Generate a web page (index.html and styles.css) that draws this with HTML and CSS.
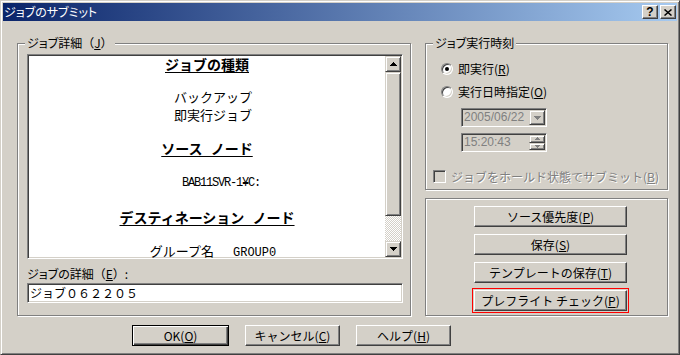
FILE: index.html
```html
<!DOCTYPE html>
<html>

	<head lang="ja">
		<meta charset="UTF-8">
		<title>ジョブのサブミット</title>
		<link rel="stylesheet" href="styles.css">
	</head>

	<body>
		<div class="window">
			<!-- タイトルバー -->
			<div class="titlebar">
				<span class="title">ジョブのサブミット</span>
				<div class="caption-btns">
					<span class="cap-btn cap-help">?</span>
					<span class="cap-btn">
						<svg width="8" height="7" viewBox="0 0 8 7"><path d="M0.5 0.5L7.5 6.5M7.5 0.5L0.5 6.5" stroke="#000" stroke-width="1.5"/></svg>
					</span>
				</div>
			</div>

			<div class="content">
				<div class="main">
					<!-- ジョブ詳細 -->
					<div class="group detail-group">
						<span class="legend">ジョブ詳細<span class="fw">（<u>J</u>）</span></span>
						<div class="listbox">
							<div class="list-text">
								<div class="l-head">ジョブの種類</div>
								<div class="l-shift l-g1">バックアップ</div>
								<div class="l-shift l-g2">即実行ジョブ</div>
								<div class="l-head l-g3">ソース ノード</div>
								<div class="l-node l-g4">BAB11SVR-1¥C:</div>
								<div class="l-head l-g3">デスティネーション ノード</div>
								<div class="l-shift l-last">グループ名<span class="l-latin">GROUP0</span></div>
							</div>
							<div class="scrollbar">
								<div class="sb-btn">
									<svg width="7" height="4" viewBox="0 0 7 4"><path d="M3 0h1v1h1v1h1v1h1v1H0V3h1V2h1V1h1z"/></svg>
								</div>
								<div class="sb-thumb"></div>
								<div class="sb-track"></div>
								<div class="sb-btn">
									<svg width="7" height="4" viewBox="0 0 7 4"><path d="M0 0h7v1H6v1H5v1H4v1H3V3H2V2H1V1H0z"/></svg>
								</div>
							</div>
						</div>
						<div class="field-label">ジョブの詳細<span class="fw">（<u>E</u>）</span>:</div>
						<div class="textbox">ジョブ０６２２０５</div>
					</div>

					<div class="side">
						<!-- ジョブ実行時刻 -->
						<div class="group time-group">
							<span class="legend">ジョブ実行時刻</span>
							<div class="radio-row">
								<span class="radio checked"><span class="dot"></span></span>
								<span>即実行(<u>R</u>)</span>
							</div>
							<div class="radio-row second">
								<span class="radio"></span>
								<span>実行日時指定(<u>O</u>)</span>
							</div>
							<div class="combo date">
								<span class="combo-text">2005/06/22</span>
								<span class="combo-btn">
									<svg width="7" height="4" viewBox="0 0 7 4"><path d="M0 0h7v1H6v1H5v1H4v1H3V3H2V2H1V1H0z" fill="#808080"/></svg>
								</span>
							</div>
							<div class="combo time">
								<span class="combo-text">15:20:43</span>
								<span class="spin">
									<span class="spin-btn"><svg width="5" height="3" viewBox="0 0 5 3"><path d="M2 0h1v1h1v1h1v1H0V2h1V1h1z" fill="#808080"/></svg></span>
									<span class="spin-btn"><svg width="5" height="3" viewBox="0 0 5 3"><path d="M0 0h5v1H4v1H3v1H2V2H1V1H0z" fill="#808080"/></svg></span>
								</span>
							</div>
							<div class="check-row">
								<span class="checkbox"></span>
								<span class="disabled">ジョブをホールド状態でサブミット(<u>B</u>)</span>
							</div>
						</div>

						<!-- 操作ボタン -->
						<div class="group action-group">
							<button class="btn wide">ソース優先度(<u>P</u>)</button>
							<button class="btn wide">保存(<u>S</u>)</button>
							<button class="btn wide">テンプレートの保存(<u>T</u>)</button>
							<button class="btn wide focus">プレフライト チェック(<u>P</u>)</button>
						</div>
					</div>
				</div>

				<div class="footer">
					<button class="btn default">OK(<u>O</u>)</button>
					<button class="btn">キャンセル(<u>C</u>)</button>
					<button class="btn">ヘルプ(<u>H</u>)</button>
				</div>
			</div>
		</div>
	</body>

</html>
```

FILE: styles.css
```css
* {
	margin: 0;
	padding: 0;
	box-sizing: border-box;
}

body {
	background-color: #d4d0c8;
	font-family: "Noto Sans CJK JP", "Liberation Sans", sans-serif;
	font-size: 12px;
	color: #000;
}

/* ウィンドウ枠 */
.window {
	width: 680px;
	height: 355px;
	border: 1px solid;
	border-color: #d4d0c8 #404040 #404040 #d4d0c8;
	box-shadow: inset 1px 1px #fff, inset -1px -1px #808080;
	padding: 2px;
	background-color: #d4d0c8;
}

/* タイトルバー */
.titlebar {
	height: 18px;
	display: flex;
	align-items: center;
	justify-content: space-between;
	padding: 0 1px 0 1px;
	background: linear-gradient(to right, #0a246a, #a6caf0);
	color: #fff;
}

.title {
	line-height: 18px;
	font-feature-settings: "palt";
}

.caption-btns {
	display: flex;
	gap: 2px;
}

.cap-btn {
	width: 16px;
	height: 14px;
	display: flex;
	align-items: center;
	justify-content: center;
	background-color: #d4d0c8;
	border: 1px solid;
	border-color: #fff #404040 #404040 #fff;
	box-shadow: inset -1px -1px #808080;
}

.cap-help {
	font-family: "Liberation Sans", sans-serif;
	font-weight: bold;
	font-size: 12px;
	color: #000;
	line-height: 12px;
}

.content {
	padding: 22px 0 0 14px;
}

.main {
	display: flex;
	gap: 14px;
	height: 273px;
}

/* グループボックス */
.group {
	position: relative;
	border: 1px solid #808080;
	box-shadow: inset 1px 1px #fff, 1px 1px #fff;
}

.legend {
	position: absolute;
	top: -8px;
	left: 7px;
	padding: 0 2px;
	line-height: 14px;
	background-color: #d4d0c8;
	font-feature-settings: "palt";
}

/* 全角括弧はプロポーショナルにしない */
.fw {
	font-feature-settings: normal;
}

.detail-group {
	width: 394px;
	padding: 10px 7px 0 9px;
}

/* 詳細リスト */
.listbox {
	display: flex;
	width: 376px;
	height: 205px;
	padding: 1px;
	background-color: #fff;
	border: 1px solid;
	border-color: #808080 #fff #fff #808080;
	box-shadow: inset 1px 1px #404040, inset -1px -1px #d4d0c8;
}

.list-text {
	flex: 1;
	text-align: center;
	font-size: 13px;
	line-height: 17px;
	white-space: nowrap;
}

.l-head {
	font-size: 14px;
	font-weight: bold;
	word-spacing: 5px;
	text-decoration: underline;
	text-underline-offset: 2px;
}

.l-g1 {
	margin-top: 15px;
}

.l-g2 {
	margin-top: 1px;
}

.l-g3 {
	margin-top: 17px;
}

.l-g4 {
	margin-top: 18px;
}

.l-last {
	margin-top: 17px;
	line-height: 15px;
}

.l-shift {
	padding-left: 12px;
}

.l-node {
	padding-left: 28px;
	font-family: "Liberation Mono", monospace;
	font-size: 12px;
	letter-spacing: -1.2px;
}

.l-latin {
	margin-left: 19px;
	font-family: "Liberation Mono", monospace;
	font-size: 12px;
}

/* スクロールバー */
.scrollbar {
	width: 16px;
	display: flex;
	flex-direction: column;
}

.sb-btn,
.sb-thumb,
.combo-btn,
.spin-btn {
	display: flex;
	align-items: center;
	justify-content: center;
	background-color: #d4d0c8;
	border: 1px solid;
	border-color: #d4d0c8 #404040 #404040 #d4d0c8;
	box-shadow: inset 1px 1px #fff, inset -1px -1px #808080;
}

.sb-btn {
	height: 16px;
}

.sb-thumb {
	height: 144px;
}

.sb-track {
	flex: 1;
	background: repeating-conic-gradient(#fff 0 25%, #d4d0c8 0 50%) 0 0 / 2px 2px;
}

.field-label {
	margin-top: 6px;
	line-height: 17px;
	font-feature-settings: "palt";
}

.textbox {
	width: 376px;
	height: 20px;
	margin-top: 1px;
	padding: 1px 2px;
	line-height: 16px;
	background-color: #fff;
	border: 1px solid;
	border-color: #808080 #fff #fff #808080;
	box-shadow: inset 1px 1px #404040, inset -1px -1px #d4d0c8;
}

/* 右側 */
.side {
	width: 243px;
	display: flex;
	flex-direction: column;
	gap: 8px;
}

.time-group {
	height: 147px;
	padding: 16px 0 0 7px;
}

.radio-row,
.check-row {
	display: flex;
	align-items: center;
	gap: 5px;
	line-height: 17px;
}

.radio-row {
	margin-left: 8px;
}

.radio-row.second {
	margin-top: 6px;
}

.radio {
	width: 12px;
	height: 12px;
	display: flex;
	align-items: center;
	justify-content: center;
	border-radius: 50%;
	background-color: #fff;
	border: 1px solid;
	border-color: #808080 #fff #fff #808080;
	box-shadow: inset 1px 1px #404040, inset -1px -1px #d4d0c8;
}

.dot {
	width: 4px;
	height: 4px;
	border-radius: 50%;
	background-color: #000;
}

.combo {
	width: 86px;
	height: 19px;
	display: flex;
	margin-left: 28px;
	padding: 1px;
	background-color: #d4d0c8;
	border: 1px solid;
	border-color: #808080 #fff #fff #808080;
	box-shadow: inset 1px 1px #404040, inset -1px -1px #d4d0c8;
}

.combo.date {
	margin-top: 8px;
}

.combo.time {
	margin-top: 6px;
}

.combo-text {
	flex: 1;
	padding-left: 1px;
	color: #808080;
	line-height: 15px;
	font-family: "Liberation Sans", sans-serif;
	font-size: 12px;
}

.combo-btn {
	width: 16px;
}

.spin {
	width: 16px;
	display: flex;
	flex-direction: column;
}

.spin-btn {
	flex: 1;
}

.check-row {
	margin-top: 16px;
}

.checkbox {
	width: 13px;
	height: 13px;
	background-color: #d4d0c8;
	border: 1px solid;
	border-color: #808080 #fff #fff #808080;
	box-shadow: inset 1px 1px #404040, inset -1px -1px #d4d0c8;
}

.disabled {
	color: #808080;
	text-shadow: 1px 1px #fff;
}

.action-group {
	flex: 1;
	display: flex;
	flex-direction: column;
	gap: 7px;
	padding: 7px 0 0 48px;
}

/* ボタン */
.btn {
	width: 95px;
	height: 21px;
	display: flex;
	align-items: center;
	justify-content: center;
	font: inherit;
	color: #000;
	background-color: #d4d0c8;
	border: 1px solid;
	border-color: #fff #404040 #404040 #fff;
	box-shadow: inset -1px -1px #808080;
}

.btn.wide {
	width: 153px;
}

.btn.focus {
	outline: 1px solid #ff0000;
	outline-offset: 1px;
}

.btn.default {
	width: 97px;
	border-color: #000;
	box-shadow: inset 1px 1px #fff, inset -1px -1px #404040, inset -2px -2px #808080;
}

.footer {
	display: flex;
	gap: 16px;
	margin-top: 9px;
	padding-left: 115px;
}
```
